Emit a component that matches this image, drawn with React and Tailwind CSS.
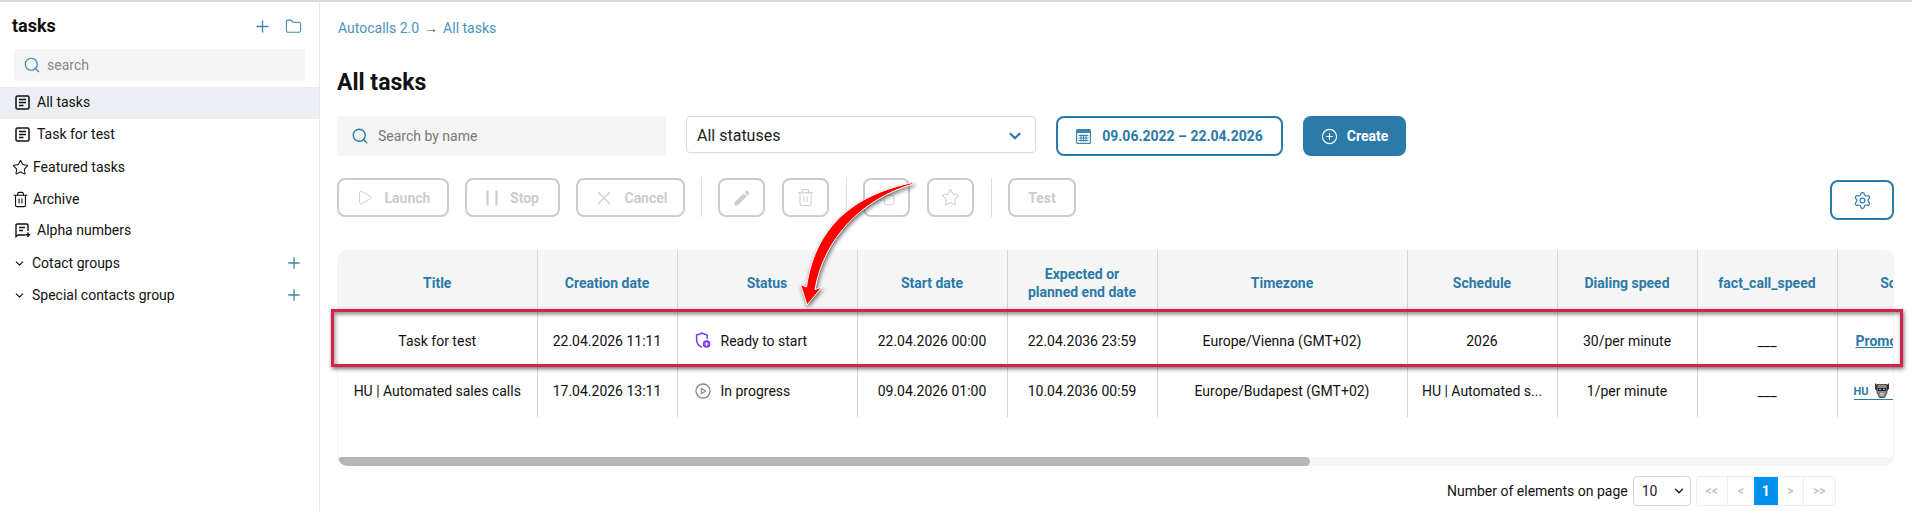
import React from "react";
import { Plus, Folder, Search, Star, Trash2, ChevronDown, Play, X, Copy, CirclePlus, Settings } from "lucide-react";

const Doc = () => (
  <svg width="15" height="15" viewBox="0 0 15 15" fill="none" stroke="#111" strokeWidth="1.5" className="shrink-0">
    <rect x="1" y="1" width="13" height="13" rx="1.5" />
    <path d="M4 4.6h7M4 7.5h7M4 10.4h4.5" />
  </svg>
);

const Alpha = () => (
  <svg width="16" height="15" viewBox="0 0 16 15" fill="none" stroke="#111" strokeWidth="1.4" className="shrink-0">
    <path d="M10.5 12H3l-2 1.5V2.2C1 1.5 1.500 1 2.2 1h9.600c.7 0 1.200.5 1.200 1.200V8" />
    <path d="M4 4.500h6M4 7.500h4" />
    <path d="M13 9.500v4.500M10.800 11.800h4.400" strokeWidth="1.500" stroke="#111" />
  </svg>
);

const Calendar = () => (
  <svg width="15" height="15" viewBox="0 0 15 15" fill="none" className="shrink-0">
    <rect x="0.6" y="0.6" width="13.8" height="13.8" rx="1" stroke="#3d86ae" strokeWidth="1.2" />
    <rect x="0.6" y="1" width="13.8" height="3" fill="#3d86ae" />
    <path d="M2.500 6.500h10M2.500 9h10M2.500 11.500h10" stroke="#3d86ae" strokeWidth="1.100" />
    <path d="M5 5.500v7M7.500 5.500v7M10 5.500v7" stroke="#3d86ae" strokeWidth="1.100" />
  </svg>
);

const Pencil = () => (
  <svg width="20" height="20" viewBox="0 0 24 24" fill="#cccccc">
    <path d="M3 17.25V21h3.75L17.81 9.94l-3.75-3.75L3 17.25zM20.71 7.04c.39-.39.39-1.02 0-1.41l-2.34-2.34c-.39-.39-1.02-.39-1.41 0l-1.83 1.83 3.75 3.75 1.83-1.83z" />
  </svg>
);

const Bars = () => (
  <svg width="12" height="16" viewBox="0 0 12 16" stroke="#cccccc" strokeWidth="2.2" className="shrink-0">
    <path d="M1.500 0.500v15M10.500 0.500v15" />
  </svg>
);

const ShieldPlus = () => (
  <svg width="16" height="17" viewBox="0 0 16 17" fill="none" className="shrink-0">
    <path d="M7 1.200 1.600 3v5c0 3.400 2.300 5.800 5 7" stroke="#7c3aed" strokeWidth="1.500" strokeLinecap="round" />
    <path d="M7 1.200 12.200 3v3.400" stroke="#7c3aed" strokeWidth="1.500" strokeLinecap="round" />
    <circle cx="11.600" cy="12" r="3.800" fill="#7c3aed" />
    <path d="M11.600 10v4M9.600 12h4" stroke="#fff" strokeWidth="1" />
  </svg>
);

const PlayCircle = () => (
  <svg width="16" height="16" viewBox="0 0 16 16" fill="none" className="shrink-0">
    <circle cx="8" cy="8" r="7" stroke="#888" strokeWidth="1.300" />
    <path d="M6.300 5.200v5.600L10.600 8z" stroke="#888" strokeWidth="1.100" strokeLinejoin="round" />
  </svg>
);

const Robot = () => (
  <svg width="16" height="17" viewBox="0 0 16 17" className="shrink-0">
    <path d="M1 1l2 2v6L1 7zM15 1l-2 2v6l2-2z" fill="#333" />
    <path d="M3 2.500h10v8L10.500 15.500h-5L3 10.500z" fill="#8b8b8b" stroke="#333" strokeWidth="0.800" />
    <rect x="7.200" y="3" width="1.600" height="2.400" fill="#e2603a" />
    <rect x="4" y="6" width="8" height="3" fill="#222" />
    <rect x="5" y="6.700" width="2" height="1.400" fill="#39c5d6" />
    <rect x="9" y="6.700" width="2" height="1.400" fill="#39c5d6" />
    <path d="M6 11.500h4M6 13h4" stroke="#ddd" strokeWidth="0.800" />
  </svg>
);

const SideRow = ({ icon, label, gap = "gap-[7px]", pl = "pl-[15px]", pb = "", active, plus }) => (
  <div className={`flex h-8 items-center text-sm text-[#111] ${gap} ${pl} ${pb} ${active ? "bg-[#ebeff3]" : ""}`}>
    {icon}
    <span className="flex-1 leading-[20px]">{label}</span>
    {plus && <Plus size={18} strokeWidth={1.700} className="mr-[16px] text-[#3d86ae]" />}
  </div>
);

const ActionButton = ({ className = "", children }) => (
  <button className={`flex h-[39px] items-center justify-center gap-[12px] rounded-lg border-2 border-[#cccccc] bg-white text-sm font-bold text-[#cccccc] ${className}`}>
    {children}
  </button>
);

const Divider = ({ className = "" }) => <div className={`h-[39px] w-px bg-[#dddddd] ${className}`} />;

const headers = [
  ["Title", "w-[199px]"],
  ["Creation date", "w-[140px]"],
  ["Status", "w-[180px]"],
  ["Start date", "w-[150px]"],
  [<>Expected or<br />planned end date</>, "w-[150px]"],
  ["Timezone", "w-[250px]"],
  ["Schedule", "w-[150px]"],
  ["Dialing speed", "w-[140px]"],
  ["fact_call_speed", "w-[140px]"],
  ["Source", "w-[130px]"],
];

const rows = [
  {
    h: "h-[49px]",
    cells: ["Task for test", "22.04.2026 11:11", null, "22.04.2026 00:00", "22.04.2036 23:59", "Europe/Vienna (GMT+02)", "2026", "30/per minute", "___"],
    status: [<ShieldPlus key="i" />, "Ready to start"],
    source: (
      <a className="ml-[18px] inline-block whitespace-nowrap text-sm font-bold leading-[16px] text-[#2b7aa8] underline">Promotion</a>
    ),
  },
  {
    h: "h-[52px]",
    cells: ["HU | Automated sales calls", "17.04.2026 13:11", null, "09.04.2026 01:00", "10.04.2036 00:59", "Europe/Budapest (GMT+02)", "HU | Automated s...", "1/per minute", "___"],
    status: [<PlayCircle key="i" />, "In progress"],
    source: (
      <a className="ml-[16px] flex items-end gap-[5px] whitespace-nowrap border-b-[1px] border-[#2b7aa8] text-[11px] font-bold leading-[14px] text-[#2b7aa8]">
        HU <Robot /> calls
      </a>
    ),
  },
];

export default function App() {
  return (
    <div className="relative h-[511px] w-[1912px] overflow-hidden bg-white font-['Roboto',sans-serif] text-[#111]">
      <div className="h-[2px] bg-[#d9d9d9]" />
      <div className="flex h-[509px]">
        <aside className="w-[320px] shrink-0 border-r border-[#e6e9ec]">
          <div className="flex h-[47px] items-center pl-3 pt-[1px]">
            <span className="flex-1 text-lg font-bold text-[#111]">tasks</span>
            <Plus size={19} strokeWidth={1.700} className="mr-[13px] text-[#3d86ae]" />
            <Folder size={17} strokeWidth={1.500} className="mr-[17px] text-[#3d86ae]" />
          </div>
          <div className="mx-[14px] flex h-8 w-[291px] items-center gap-[6px] rounded bg-[#f5f5f5] pl-[9px] text-sm text-[#888888]">
            <Search size={18} strokeWidth={1.500} className="text-[#3d86ae]" />
            search
          </div>
          <div className="mt-[6px]">
            <SideRow active pb="pb-[2px]" icon={<Doc />} label="All tasks" />
            <SideRow pb="pb-[2px]" icon={<Doc />} label="Task for test" />
            <SideRow pl="pl-3" gap="gap-[4px]" icon={<Star size={17} strokeWidth={1.500} />} label="Featured tasks" />
            <SideRow pl="pl-3" gap="gap-[4px]" icon={<Trash2 size={17} strokeWidth={1.600} />} label="Archive" />
            <SideRow pb="pb-[2px]" icon={<Alpha />} label="Alpha numbers" gap="gap-[6px]" />
            <SideRow pl="pl-[13px]" gap="gap-[6px]" icon={<ChevronDown size={13} strokeWidth={2} />} label="Cotact groups" plus />
            <SideRow pl="pl-[13px]" gap="gap-[6px]" icon={<ChevronDown size={13} strokeWidth={2} />} label="Special contacts group" plus />
          </div>
        </aside>

        <main className="min-w-0 flex-1 pl-[17px] pr-[18px]">
          <div className="flex h-[50px] items-center gap-[5px] pl-px pt-[2px] text-sm text-[#4a93bb]">
            Autocalls 2.0 <span className="text-sm text-[#555]">→</span> All tasks
          </div>
          <h1 className="mt-[15px] h-8 text-[23px] font-bold leading-8 text-[#111]">All tasks</h1>
          <div className="mt-[17px] flex items-start">
            <div className="flex h-10 w-[329px] items-center gap-[9px] rounded bg-[#f5f5f5] pl-[14px] text-sm text-[#777777]">
              <Search size={18} strokeWidth={1.800} className="text-[#2b7aa8]" />
              Search by name
            </div>
            <div className="ml-5 flex h-[37px] w-[350px] items-center justify-between rounded border border-[#d9d9d9] pl-[10px] pr-[11px] pt-[2px] text-base text-[#222]">
              All statuses
              <ChevronDown size={18} strokeWidth={3} className="text-[#2b7aa8]" />
            </div>
            <div className="ml-[20px] flex h-10 w-[227px] items-center justify-center gap-[11px] rounded-lg border-2 border-[#2b7aa8] text-sm font-bold text-[#2b7aa8]">
              <Calendar />
              09.06.2022 – 22.04.2026
            </div>
            <button className="ml-5 flex h-10 w-[103px] items-center justify-center gap-[9px] rounded-lg bg-[#2b7aa8] text-sm font-bold text-white">
              <CirclePlus size={17} strokeWidth={1.600} />
              Create
            </button>
          </div>
          <div className="mt-[22px] flex items-start">
            <ActionButton className="w-[112px]"><Play size={17} strokeWidth={1.300} />Launch</ActionButton>
            <ActionButton className="ml-4 w-[95px]"><Bars />Stop</ActionButton>
            <ActionButton className="ml-4 w-[109px] !gap-[9px]"><X size={22} strokeWidth={1.300} />Cancel</ActionButton>
            <Divider className="ml-4" />
            <ActionButton className="ml-4 w-[47px]"><Pencil /></ActionButton>
            <ActionButton className="ml-[17px] w-[47px]"><Trash2 size={19} strokeWidth={1.300} /></ActionButton>
            <Divider className="ml-[17px]" />
            <ActionButton className="ml-4 w-[47px]"><Copy size={16} strokeWidth={1.300} /></ActionButton>
            <ActionButton className="ml-[17px] w-[47px]"><Star size={19} strokeWidth={1.300} /></ActionButton>
            <Divider className="ml-[17px]" />
            <ActionButton className="ml-4 w-[68px]">Test</ActionButton>
            <button className="ml-auto mt-[2px] flex h-10 w-[64px] items-center justify-center rounded-lg border-2 border-[#2b7aa8] text-[#2b7aa8]">
              <Settings size={19} strokeWidth={1.500} />
            </button>
          </div>

          <div className="mt-[30px] w-[1557px] overflow-hidden rounded-[10px] border-l border-r border-[#f4f4f4]">
            <table className="w-[1629px] table-fixed border-collapse text-sm text-[#111]">
              <thead>
                <tr className="h-[66px] bg-[#f5f5f5]">
                  {headers.map(([h, w], i) => (
                    <th key={i} className={`${w} ${i < 9 ? "border-r border-[#d5d5d5]" : ""} text-center text-sm font-bold leading-[18px] text-[#2b7aa8]`}>
                      {h}
                    </th>
                  ))}
                </tr>
              </thead>
              <tbody>
                {rows.map((r, ri) => (
                  <tr key={ri} className={r.h}>
                    {r.cells.map((c, i) =>
                      c === null ? (
                        <td key={i} className="border-r border-[#d5d5d5] pl-[17px]">
                          <div className="flex items-center gap-[10px]">
                            {r.status[0]}
                            {r.status[1]}
                          </div>
                        </td>
                      ) : (
                        <td key={i} className="border-r border-[#d5d5d5] text-center">
                          {c}
                        </td>
                      )
                    )}
                    <td className="overflow-hidden">{r.source}</td>
                  </tr>
                ))}
              </tbody>
            </table>
            <div className="mt-[40px] h-[9px] bg-[#f5f5f5]">
              <div className="h-[9px] w-[972px] rounded-full bg-[#b5b5b5]" />
            </div>
          </div>

          <div className="mt-[10px] flex items-center">
            <span className="ml-[1110px] text-sm text-[#111]">Number of elements on page</span>
            <div className="ml-[5px] flex h-[30px] w-[58px] items-center justify-between rounded border border-[#d5d5d5] pl-2 pr-[4px] text-sm text-[#222]">
              10
              <ChevronDown size={14} strokeWidth={2.500} />
            </div>
            <div className="ml-[5px] flex h-[30px] items-stretch rounded border border-[#eeeeee] text-xs font-bold text-[#c4c4c4]">
              <span className="flex w-[31px] items-center justify-center border-r border-[#eeeeee]">&lt;&lt;</span>
              <span className="flex w-[26px] items-center justify-center">&lt;</span>
              <span className="flex w-[24px] items-center justify-center bg-[#0090ee] text-sm text-white">1</span>
              <span className="flex w-[26px] items-center justify-center border-r border-[#eeeeee]">&gt;</span>
              <span className="flex w-[31px] items-center justify-center">&gt;&gt;</span>
            </div>
          </div>
        </main>
      </div>

      <div className="pointer-events-none absolute left-[331px] top-[309px] h-[58px] w-[1572px] border-[3px] border-[#d6224a] shadow-[1px_2px_4px_rgba(0,0,0,0.55),inset_1px_2px_4px_rgba(0,0,0,0.45)]" />

      <svg className="pointer-events-none absolute left-0 top-0 drop-shadow-[1px_2px_2px_rgba(0,0,0,0.6)]" width="1912" height="511" viewBox="0 0 1912 511">
        <path
          d="M913 182.500C862 193 816 220 806.500 287L800.500 284.500L807 305L822 287L815 289.500C824 238 862 199 913 184Z"
          fill="#ff0000"
          stroke="#ffffff"
          strokeWidth="1"
          strokeLinejoin="round"
        />
      </svg>
    </div>
  );
}
